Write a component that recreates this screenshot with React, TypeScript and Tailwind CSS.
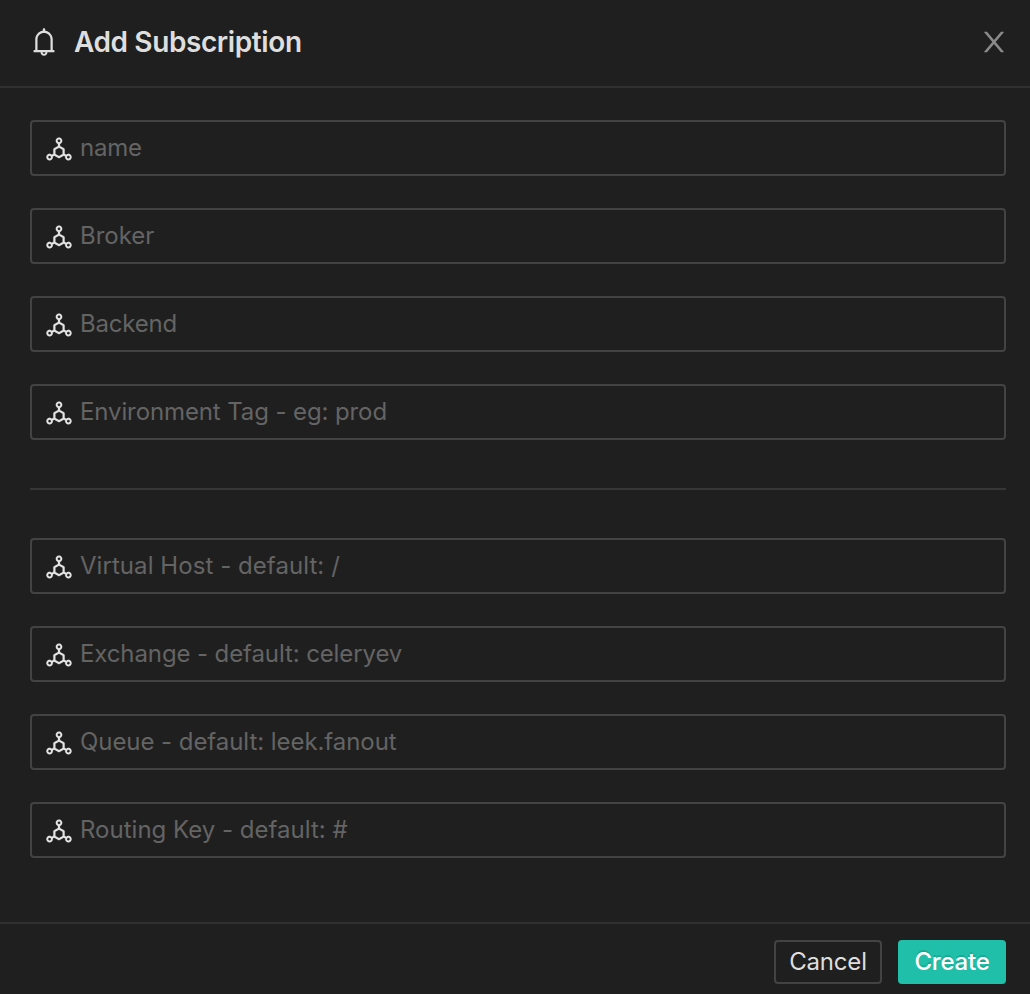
import { AiOutlineBell, AiOutlineDeploymentUnit } from "react-icons/ai";

type Field = { label: string; tracking: string };

const general: Field[] = [
  { label: "name", tracking: "tracking-[-0.25px]" },
  { label: "Broker", tracking: "tracking-[0px]" },
  { label: "Backend", tracking: "tracking-[-0.2px]" },
  { label: "Environment Tag - eg: prod", tracking: "tracking-[-0.11px]" },
];

const broker: Field[] = [
  { label: "Virtual Host - default: /", tracking: "tracking-[0.06px]" },
  { label: "Exchange - default: celeryev", tracking: "tracking-[-0.11px]" },
  { label: "Queue - default: leek.fanout", tracking: "tracking-[-0.06px]" },
  { label: "Routing Key - default: #", tracking: "tracking-[0.01px]" },
];

function CloseIcon() {
  return (
    <svg viewBox="0 0 1024 1024" className="size-8" fill="currentColor" aria-hidden="true">
      <path d="M563.8 512l262.5-312.9c4.4-5.2.7-13.1-6.1-13.1h-79.8c-4.7 0-9.2 2.1-12.3 5.7L511.6 449.8 295.1 191.7c-3-3.6-7.5-5.7-12.3-5.7H203c-6.8 0-10.5 7.9-6.1 13.1L459.4 512 196.9 824.9A7.95 7.95 0 0 0 203 838h79.8c4.7 0 9.2-2.1 12.3-5.7l216.5-258.1 216.5 258.1c3 3.6 7.5 5.7 12.3 5.7h79.8c6.8 0 10.5-7.9 6.1-13.1L563.8 512z" />
    </svg>
  );
}

function TextField({ label, tracking }: Field) {
  return (
    <label className="flex h-14 items-center rounded-[4px] border-2 border-[#434343] pl-3 pr-5">
      <AiOutlineDeploymentUnit className="mt-0.5 size-[30px] shrink-0 stroke-[4px] text-[#e4e4e4]" />
      <input
        type="text"
        placeholder={label}
        className={`ml-1.5 min-w-0 flex-1 bg-transparent text-2xl leading-8 font-[425] text-[#dedede] outline-none placeholder:text-[#646464] placeholder:opacity-100 ${tracking}`}
      />
    </label>
  );
}

export default function App() {
  return (
    <div className="flex h-[994px] w-[1030px] flex-col bg-[#1f1f1f] font-['Inter',sans-serif] text-[#dedede]">
      <header className="flex h-[88px] items-center border-b-2 border-[#303030] pb-0.5 pl-7 pr-5">
        <AiOutlineBell className="size-8" />
        <h1 className="ml-3.5 flex-1 text-[28px] leading-9 font-semibold tracking-[-0.4px]">Add Subscription</h1>
        <button type="button" aria-label="Close" className="text-[#8a8a8a]">
          <CloseIcon />
        </button>
      </header>
      <main className="flex-1 px-[30px] pr-6 pt-8">
        <div className="flex flex-col gap-8">
          {general.map((f) => (
            <TextField key={f.label} {...f} />
          ))}
        </div>
        <hr className="my-12 border-t-2 border-[#363636]" />
        <div className="flex flex-col gap-8">
          {broker.map((f) => (
            <TextField key={f.label} {...f} />
          ))}
        </div>
      </main>
      <footer className="flex h-[72px] items-start justify-end gap-4 border-t-2 border-[#303030] pt-4 pr-6">
        <button type="button" className="h-11 w-[108px] rounded-[4px] border-2 border-[#434343] text-2xl leading-8 font-[425] tracking-[-0.2px]">
          Cancel
        </button>
        <button
          type="button"
          className="h-11 w-[108px] rounded-[4px] bg-[#20bfa9] text-2xl leading-8 font-[450] tracking-[-0.2px] text-white [text-shadow:0_-2px_0_rgb(0_0_0_/_0.12)]"
        >
          Create
        </button>
      </footer>
    </div>
  );
}
